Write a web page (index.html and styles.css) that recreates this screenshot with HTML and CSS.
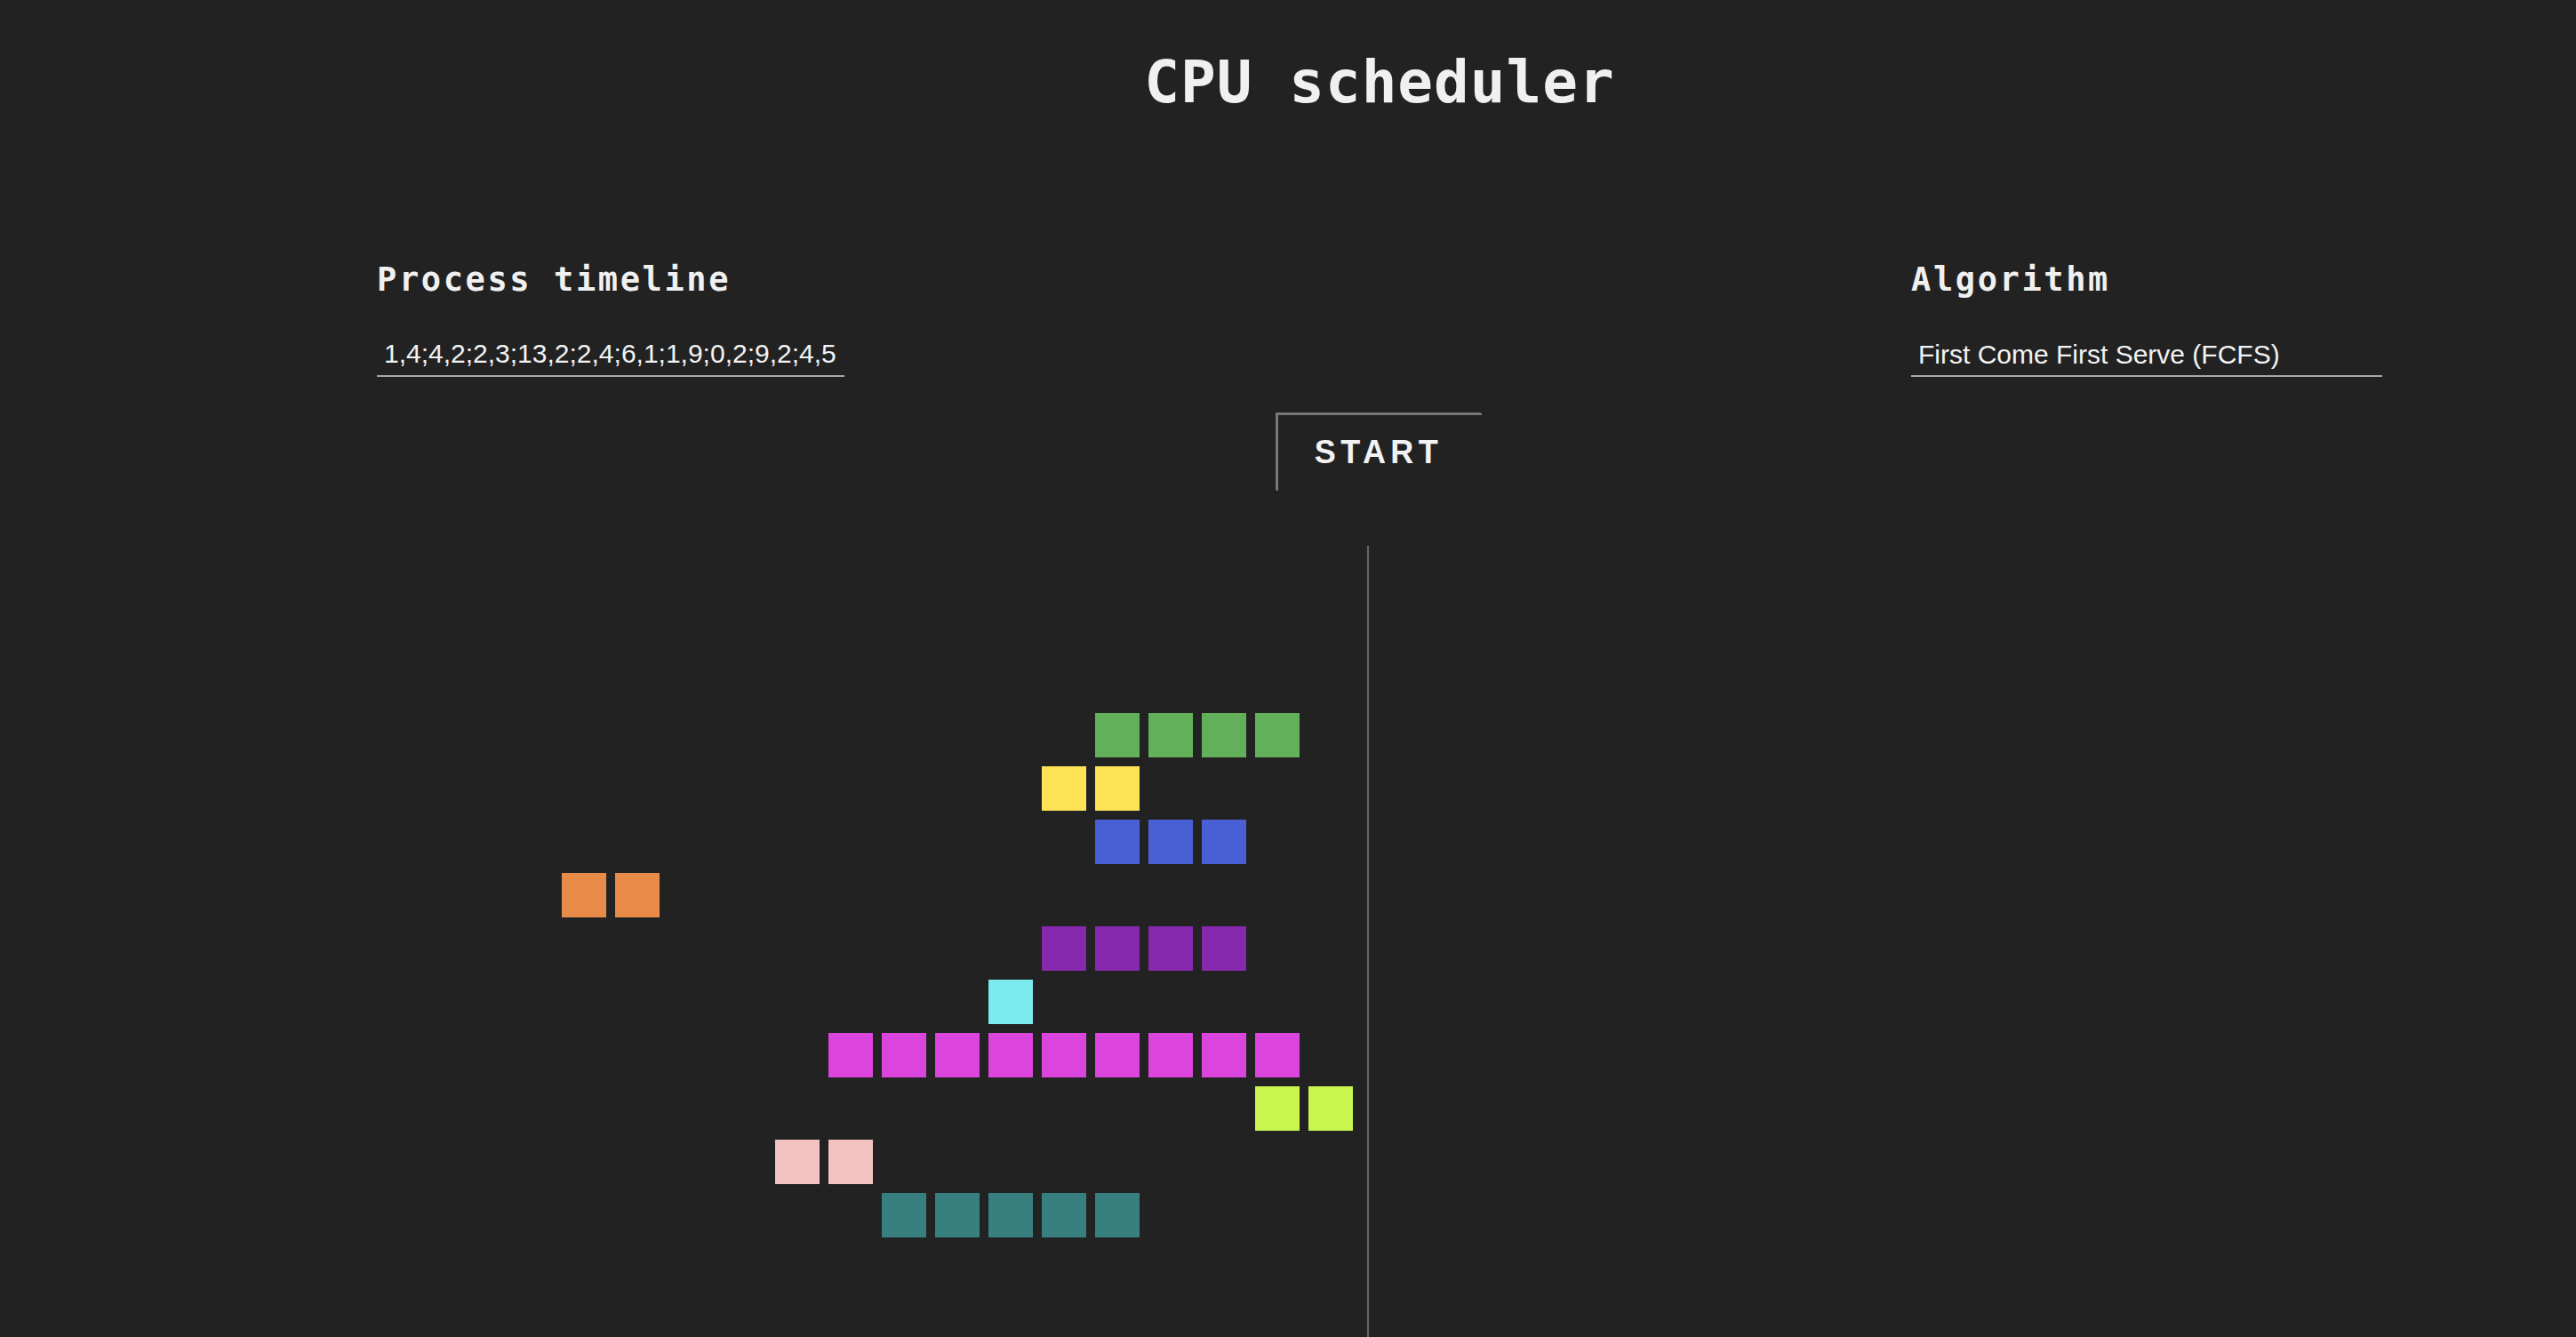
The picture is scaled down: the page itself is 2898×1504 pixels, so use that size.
FILE: index.html
```html
<!DOCTYPE html>
<html lang="en">
<head>
<meta charset="utf-8">
<title>CPU scheduler</title>
<link rel="stylesheet" href="styles.css">
</head>
<body>
<div class="page">
  <h1 class="title">CPU scheduler</h1>

  <form class="controls">
    <div class="field">
      <label class="field-label" for="timeline">Process timeline</label>
      <input class="field-input" id="timeline" type="text" value="1,4;4,2;2,3;13,2;2,4;6,1;1,9;0,2;9,2;4,5">
    </div>
    <div class="field">
      <label class="field-label" for="algorithm">Algorithm</label>
      <select class="field-input field-select" id="algorithm">
        <option>First Come First Serve (FCFS)</option>
      </select>
    </div>
  </form>

  <div class="actions">
    <button class="start-btn" type="button">START</button>
  </div>

  <div class="chart">
    <div class="tracks">
      <div class="track" style="--start: 10"><span class="block c-green"></span><span class="block c-green"></span><span class="block c-green"></span><span class="block c-green"></span></div>
      <div class="track" style="--start: 9"><span class="block c-yellow"></span><span class="block c-yellow"></span></div>
      <div class="track" style="--start: 10"><span class="block c-blue"></span><span class="block c-blue"></span><span class="block c-blue"></span></div>
      <div class="track" style="--start: 0"><span class="block c-orange"></span><span class="block c-orange"></span></div>
      <div class="track" style="--start: 9"><span class="block c-purple"></span><span class="block c-purple"></span><span class="block c-purple"></span><span class="block c-purple"></span></div>
      <div class="track" style="--start: 8"><span class="block c-cyan"></span></div>
      <div class="track" style="--start: 5"><span class="block c-magenta"></span><span class="block c-magenta"></span><span class="block c-magenta"></span><span class="block c-magenta"></span><span class="block c-magenta"></span><span class="block c-magenta"></span><span class="block c-magenta"></span><span class="block c-magenta"></span><span class="block c-magenta"></span></div>
      <div class="track" style="--start: 13"><span class="block c-lime"></span><span class="block c-lime"></span></div>
      <div class="track" style="--start: 4"><span class="block c-pink"></span><span class="block c-pink"></span></div>
      <div class="track" style="--start: 6"><span class="block c-teal"></span><span class="block c-teal"></span><span class="block c-teal"></span><span class="block c-teal"></span><span class="block c-teal"></span></div>
    </div>
    <div class="now-line"></div>
  </div>
</div>
</body>
</html>
```

FILE: styles.css
```css
* {
  box-sizing: border-box;
}

html, body {
  margin: 0;
  padding: 0;
  background: #222222;
  overflow: hidden;
}

body {
  color: #eeeeee;
  font-family: "DejaVu Sans Mono", monospace;
}

.page {
  padding-left: 206px;
  height: 1504px;
}

.title {
  margin: 0;
  padding-top: 60px;
  font-family: "DejaVu Sans Mono", monospace;
  font-weight: bold;
  font-size: 66px;
  line-height: 66px;
  letter-spacing: 1px;
  text-align: center;
  color: #f0f0f0;
}

.controls {
  width: 2256px;
  margin: 170px auto 0;
  display: flex;
  justify-content: space-between;
}

.field {
  display: flex;
  flex-direction: column;
  gap: 44px;
}

.field-label {
  font-family: "DejaVu Sans Mono", monospace;
  font-weight: bold;
  font-size: 37px;
  line-height: 37px;
  letter-spacing: 2.6px;
  color: #f0f0f0;
}

.field-input {
  display: block;
  width: 526px;
  height: 47px;
  margin: 0;
  padding: 0 8px 3px;
  border: none;
  border-bottom: 2px solid #a8a8a8;
  border-radius: 0;
  background: transparent;
  color: #f2f2f2;
  font-family: "Liberation Sans", Arial, sans-serif;
  font-size: 30px;
  outline: none;
}

.field-select {
  width: 530px;
  appearance: none;
  -webkit-appearance: none;
}

.field-select option {
  background: #222222;
  color: #f2f2f2;
}

.actions {
  display: flex;
  justify-content: center;
  margin-top: 40px;
  padding-right: 2px;
}

.start-btn {
  margin: 0;
  padding: 24px 44px 25px 41px;
  border: none;
  border-top: 3px solid #787878;
  border-left: 3px solid #787878;
  border-top-right-radius: 2px;
  border-bottom-left-radius: 2px;
  background: transparent;
  color: #f2f2f2;
  font-family: "Liberation Sans", Arial, sans-serif;
  font-weight: bold;
  font-size: 36px;
  line-height: 36px;
  letter-spacing: 5.4px;
  cursor: pointer;
}

.chart {
  display: flex;
  align-items: stretch;
  gap: 16px;
  margin-top: 62px;
  margin-left: 426px;
  height: 890px;
}

.tracks {
  width: 890px;
  padding-top: 188px;
  display: flex;
  flex-direction: column;
  gap: 10px;
}

.track {
  display: flex;
  gap: 10px;
  height: 50px;
  margin-left: calc(var(--start) * 60px);
}

.block {
  flex: 0 0 50px;
  width: 50px;
  height: 50px;
}

.now-line {
  width: 2px;
  background: #666666;
}

.c-green   { background: #62b15a; }
.c-yellow  { background: #fce254; }
.c-blue    { background: #4960d4; }
.c-orange  { background: #e88b49; }
.c-purple  { background: #8729af; }
.c-cyan    { background: #7cebed; }
.c-magenta { background: #db44dd; }
.c-lime    { background: #c8f54e; }
.c-pink    { background: #f2c2c1; }
.c-teal    { background: #388080; }
```
